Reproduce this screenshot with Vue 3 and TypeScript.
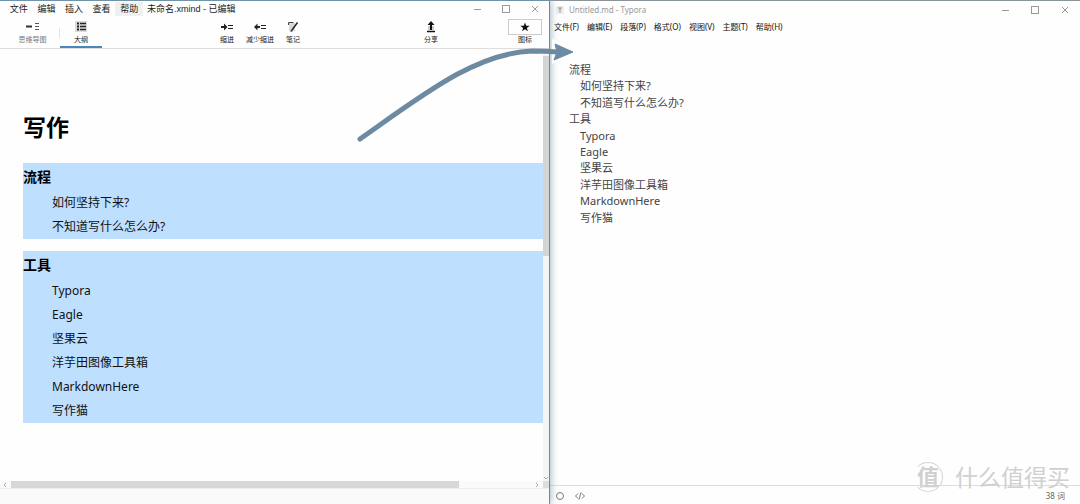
<script setup lang="ts">
interface Topic {
  title: string
  children: string[]
}

const topics: Topic[] = [
  { title: '流程', children: ['如何坚持下来?', '不知道写什么怎么办?'] },
  { title: '工具', children: ['Typora', 'Eagle', '坚果云', '洋芋田图像工具箱', 'MarkdownHere', '写作猫'] },
]

const mindMenus: string[] = ['文件', '编辑', '插入', '查看', '帮助']
const typoraMenus: string[] = ['文件(F)', '编辑(E)', '段落(P)', '格式(O)', '视图(V)', '主题(T)', '帮助(H)']
</script>

<template>
  <main class="desktop">
    <section class="mind">
      <header class="mind-title">
        <nav class="mind-menu">
          <button v-for="m in mindMenus" :key="m" type="button" :class="{ active: m === '帮助' }">{{ m }}</button>
        </nav>
        <h1 class="mind-name">未命名.xmind - 已编辑</h1>
        <div class="win-buttons">
          <button type="button" aria-label="最小化"><svg viewBox="0 0 8 8"><path d="M1 4.5h7" /></svg></button>
          <button type="button" aria-label="最大化"><svg viewBox="0 0 8 8"><rect x="0.5" y="0.5" width="7" height="7" /></svg></button>
          <button type="button" aria-label="关闭"><svg viewBox="0 0 8 8"><path d="M1 1l6 6M7 1l-6 6" /></svg></button>
        </div>
      </header>

      <div class="toolbar">
        <div class="tools modes">
          <button type="button" class="tool dim">
            <svg viewBox="0 0 14 12"><path d="M0 5.500h6" stroke="#333" stroke-width="2" /><path d="M9 2.500h4M9 5.500h4M9 8.500h4" stroke="#555" /></svg>
            <span>思维导图</span>
          </button>
          <i class="divider"></i>
          <button type="button" class="tool selected">
            <svg viewBox="0 0 14 12"><rect x="1" width="12" height="11" fill="#dcdcdc" /><path d="M3 2.500h2M3 5.500h2M3 8.500h2" stroke="#222" stroke-width="2" /><path d="M6 2.500h6M6 5.500h6M6 8.500h6" stroke="#222" stroke-width="1.500" /></svg>
            <span>大纲</span>
          </button>
        </div>
        <div class="tools edits">
          <button type="button" class="tool">
            <svg viewBox="0 0 14 12"><path d="M1 6h5" stroke="#222" stroke-width="2" /><path d="M4 2.500L7.500 6L4 9.500z" fill="#222" /><path d="M8 4.500h5M8 7.500h5" stroke="#222" /></svg>
            <span>缩进</span>
          </button>
          <button type="button" class="tool">
            <svg viewBox="0 0 14 12"><path d="M3 6h4" stroke="#222" stroke-width="2" /><path d="M4.500 2.500L1 6l3.500 3.500z" fill="#222" /><path d="M8 4.500h5M8 7.500h5" stroke="#222" /></svg>
            <span>减少缩进</span>
          </button>
          <button type="button" class="tool">
            <svg viewBox="0 0 14 12"><path d="M3 2h6v8H3z" fill="#d8d8d8" /><path d="M2.500 4V1.500h5" stroke="#444" fill="none" /><path d="M11.500 1.500L6 9" stroke="#222" stroke-width="1.500" /><path d="M4.500 11l.5-2.500L7 10z" fill="#222" /></svg>
            <span>笔记</span>
          </button>
        </div>
        <div class="tools share">
          <button type="button" class="tool">
            <svg viewBox="0 0 14 12"><path d="M4 5h6v4H4z" fill="#ccc" /><path d="M7 3v6" stroke="#111" stroke-width="2" /><path d="M3.500 4L7 0l3.500 4z" fill="#111" /><path d="M3 10.500h8" stroke="#111" stroke-width="1.500" /></svg>
            <span>分享</span>
          </button>
        </div>
        <div class="tools marker">
          <button type="button" class="tool boxed">
            <svg viewBox="0 0 14 12"><path d="M7 1.500l1.200 3.200 3.500.1-2.800 2.100 1 3.400L7 8.300l-2.900 2 1-3.400-2.800-2.100 3.500-.1z" fill="#111" /></svg>
            <span>图标</span>
          </button>
        </div>
      </div>

      <div class="mind-body">
        <article class="outline">
          <h2>写作</h2>
          <section v-for="t in topics" :key="t.title" class="topic">
            <h3>{{ t.title }}</h3>
            <ul>
              <li v-for="c in t.children" :key="c">{{ c }}</li>
            </ul>
          </section>
        </article>
        <div class="vscroll">
          <i class="vthumb"></i>
          <svg viewBox="0 0 6 6"><path d="M1 2l2 2 2-2" /></svg>
        </div>
      </div>
      <div class="hscroll">
        <svg viewBox="0 0 6 6"><path d="M4 1L2 3l2 2" /></svg>
        <div class="htrack"><i class="hthumb"></i></div>
        <svg viewBox="0 0 6 6"><path d="M2 1l2 2-2 2" /></svg>
        <i class="corner"></i>
      </div>
      <footer class="mind-foot"></footer>
    </section>

    <section class="typora">
      <header class="ty-title">
        <svg class="ty-logo" viewBox="0 0 8 8"><rect width="8" height="8" rx="1" fill="#eee" /><path d="M2 2h4M4 2v4.500" stroke="#888" fill="none" /></svg>
        <h1>Untitled.md - Typora</h1>
        <div class="win-buttons">
          <button type="button" aria-label="最小化"><svg viewBox="0 0 8 8"><path d="M1 4.500h7" /></svg></button>
          <button type="button" aria-label="最大化"><svg viewBox="0 0 8 8"><rect x="0.5" y="0.5" width="7" height="7" /></svg></button>
          <button type="button" aria-label="关闭"><svg viewBox="0 0 8 8"><path d="M1 1l6 6M7 1l-6 6" /></svg></button>
        </div>
      </header>
      <nav class="ty-menu">
        <button v-for="m in typoraMenus" :key="m" type="button">{{ m }}</button>
      </nav>
      <article class="doc">
        <template v-for="t in topics" :key="t.title">
          <p>{{ t.title }}</p>
          <p v-for="c in t.children" :key="c" class="child">{{ c }}</p>
        </template>
      </article>
      <footer class="ty-foot">
        <button type="button" aria-label="侧边栏"><svg viewBox="0 0 10 10"><circle cx="5" cy="5" r="3.500" /></svg></button>
        <button type="button" aria-label="源代码模式"><svg viewBox="0 0 10 10"><path d="M3 2.500L.5 5 3 7.500M7 2.500L9.500 5 7 7.500M6 1.500L4 8.500" /></svg></button>
        <span class="count">38 词</span>
      </footer>
    </section>

    <svg class="arrow" viewBox="0 0 220 104">
      <path class="halo" d="M198 -1L224 12L198 24z" />
      <path class="line" d="M6 99C70 54 122 13 178 11Q192 11 204 12" />
      <path class="head" d="M201 4L219 12L200 20L203 12z" />
    </svg>

    <div class="watermark">
      <span class="seal">值</span>
      <span class="brand">什么值得买</span>
    </div>
  </main>
</template>

<style>
body {
  margin: 0;
}
</style>

<style scoped>
.desktop {
  position: relative;
  display: grid;
  grid-template-columns: 55fr 53fr;
  min-height: 100vh;
  overflow: hidden;
  background: #fefefe;
  color: #222;
  font-family: "Noto Sans", "Noto Sans CJK SC", sans-serif;
}
h1, h2, h3, p, ul {
  margin: 0;
  padding: 0;
}
li {
  list-style: none;
}
button {
  margin: 0;
  padding: 0;
  border: 0;
  background: none;
  color: inherit;
  font: inherit;
}
svg {
  display: block;
}
.mind {
  display: flex;
  flex-direction: column;
  border-top: 1px solid #6f93a9;
  border-right: 1px solid #5c8fae;
  box-shadow: 0 0 8px #8fa9b8;
  background: #fefefe;
  z-index: 1;
}
.mind-title {
  display: flex;
  align-items: center;
  height: 16px;
  padding-left: 5px;
  font-size: 9px;
  line-height: 14px;
}
.mind-menu {
  display: flex;
  width: 138px;
}
.mind-menu button {
  flex: 1;
  text-align: center;
}
.mind-menu .active {
  background: #f0f0f0;
}
.mind-name {
  margin-left: 4px;
  font-family: "Liberation Sans", "Noto Sans CJK SC", sans-serif;
  font-size: 9px;
  font-weight: 400;
}
.win-buttons {
  display: flex;
  gap: 21px;
  margin-left: auto;
  margin-right: 10px;
}
.win-buttons svg {
  width: 8px;
  height: 8px;
  fill: none;
  stroke: #999;
}
.toolbar {
  display: flex;
  align-items: stretch;
  height: 31px;
  border-bottom: 1px solid #ddd;
  font-size: 7px;
  line-height: 10px;
}
.tools {
  display: flex;
}
.tool {
  display: flex;
  flex-direction: column;
  align-items: center;
  padding-top: 4px;
}
.tool svg {
  width: 14px;
  height: 12px;
  margin-bottom: 2px;
}
.dim {
  width: 59px;
  padding-left: 6px;
  color: #777;
}
.divider {
  align-self: center;
  width: 1px;
  height: 10px;
  background: #e4e4e4;
}
.selected {
  width: 42px;
  border-bottom: 2px solid #4a86b8;
}
.edits {
  gap: 12px;
  margin-left: 118px;
}
.share {
  margin-left: 124px;
}
.marker {
  margin-left: auto;
  margin-right: 7px;
}
.boxed {
  width: 34px;
  padding-top: 2px;
}
.boxed svg {
  box-sizing: border-box;
  width: 100%;
  height: 16px;
  margin-bottom: 0;
  padding: 1px;
  border: 1px solid #ccc;
}
.mind-body {
  flex: 1;
  display: flex;
}
.outline {
  flex: 1;
  padding: 60px 0 0 23px;
  color: #111;
}
.outline h2 {
  margin-bottom: 18px;
  color: #000;
  font-size: 23px;
  line-height: 36px;
}
.topic {
  margin-bottom: 12px;
  background: #bfdfff;
}
.topic h3 {
  color: #000;
  font-size: 14px;
  line-height: 28px;
}
.topic li {
  padding-left: 29px;
  font-size: 12px;
  line-height: 24px;
}
.vscroll {
  display: flex;
  flex-direction: column;
  justify-content: space-between;
  width: 6px;
  padding-top: 7px;
  background: #f5f5f5;
}
.vthumb {
  height: 47%;
  background: #d4d4d4;
}
.vscroll svg,
.hscroll svg {
  width: 6px;
  height: 6px;
  fill: none;
  stroke: #aaa;
}
.hscroll {
  display: flex;
  align-items: center;
  height: 7px;
  background: #fafafa;
}
.hscroll > svg {
  margin: 0 3px 0 2px;
}
.htrack {
  flex: 1;
  height: 7px;
}
.hthumb {
  display: block;
  width: 86%;
  height: 7px;
  background: #d8d8d8;
}
.corner {
  width: 6px;
  height: 7px;
  background: #ddd;
}
.mind-foot {
  height: 15px;
  border-top: 1px solid #eee;
  background: #fafafa;
}
.typora {
  display: flex;
  flex-direction: column;
  border-top: 1px solid #8a9499;
}
.ty-title {
  display: flex;
  align-items: center;
  height: 18px;
  padding-left: 6px;
}
.ty-title .win-buttons {
  gap: 22px;
  margin-right: 11px;
}
.ty-logo {
  width: 8px;
  height: 8px;
}
.ty-title h1 {
  margin-left: 5px;
  color: #999;
  font-size: 8px;
  font-weight: 400;
  line-height: 12px;
}
.ty-menu {
  display: flex;
  gap: 8px;
  height: 16px;
  padding-left: 4px;
  color: #111;
  font-size: 8px;
  line-height: 16px;
}
.doc {
  display: grid;
  grid-auto-rows: 1fr;
  height: 164px;
  margin-bottom: auto;
  padding: 27px 0 0 19px;
  color: #444;
  font-size: 11px;
  line-height: 16px;
}
.child {
  padding-left: 11px;
}
.ty-foot {
  display: flex;
  align-items: center;
  gap: 10px;
  height: 16px;
  padding: 2px 15px 0 5px;
  border-top: 1px solid #ddd;
  color: #666;
  font-size: 8px;
  line-height: 12px;
}
.ty-foot svg {
  width: 10px;
  height: 10px;
  fill: none;
  stroke: #777;
}
.count {
  margin-left: auto;
}
.arrow {
  position: absolute;
  z-index: 2;
  top: 40px;
  left: 354px;
  width: 220px;
  height: 104px;
  fill: none;
  overflow: visible;
}
.halo {
  fill: #fff;
}
.line {
  stroke: #6d8aa3;
  stroke-width: 5;
  stroke-linecap: round;
}
.head {
  fill: #6d8aa3;
  stroke: #6d8aa3;
  stroke-linejoin: round;
}
.watermark {
  position: absolute;
  right: 10px;
  bottom: 12px;
  display: flex;
  align-items: center;
  gap: 12px;
  color: #d0d0d0;
  line-height: 30px;
}
.seal {
  box-sizing: border-box;
  width: 30px;
  height: 30px;
  border: 1px solid #d4d4d4;
  border-left-color: transparent;
  border-radius: 50%;
  font-size: 22px;
  font-weight: 700;
  line-height: 27px;
  text-align: center;
}
.brand {
  font-size: 23px;
}
</style>
